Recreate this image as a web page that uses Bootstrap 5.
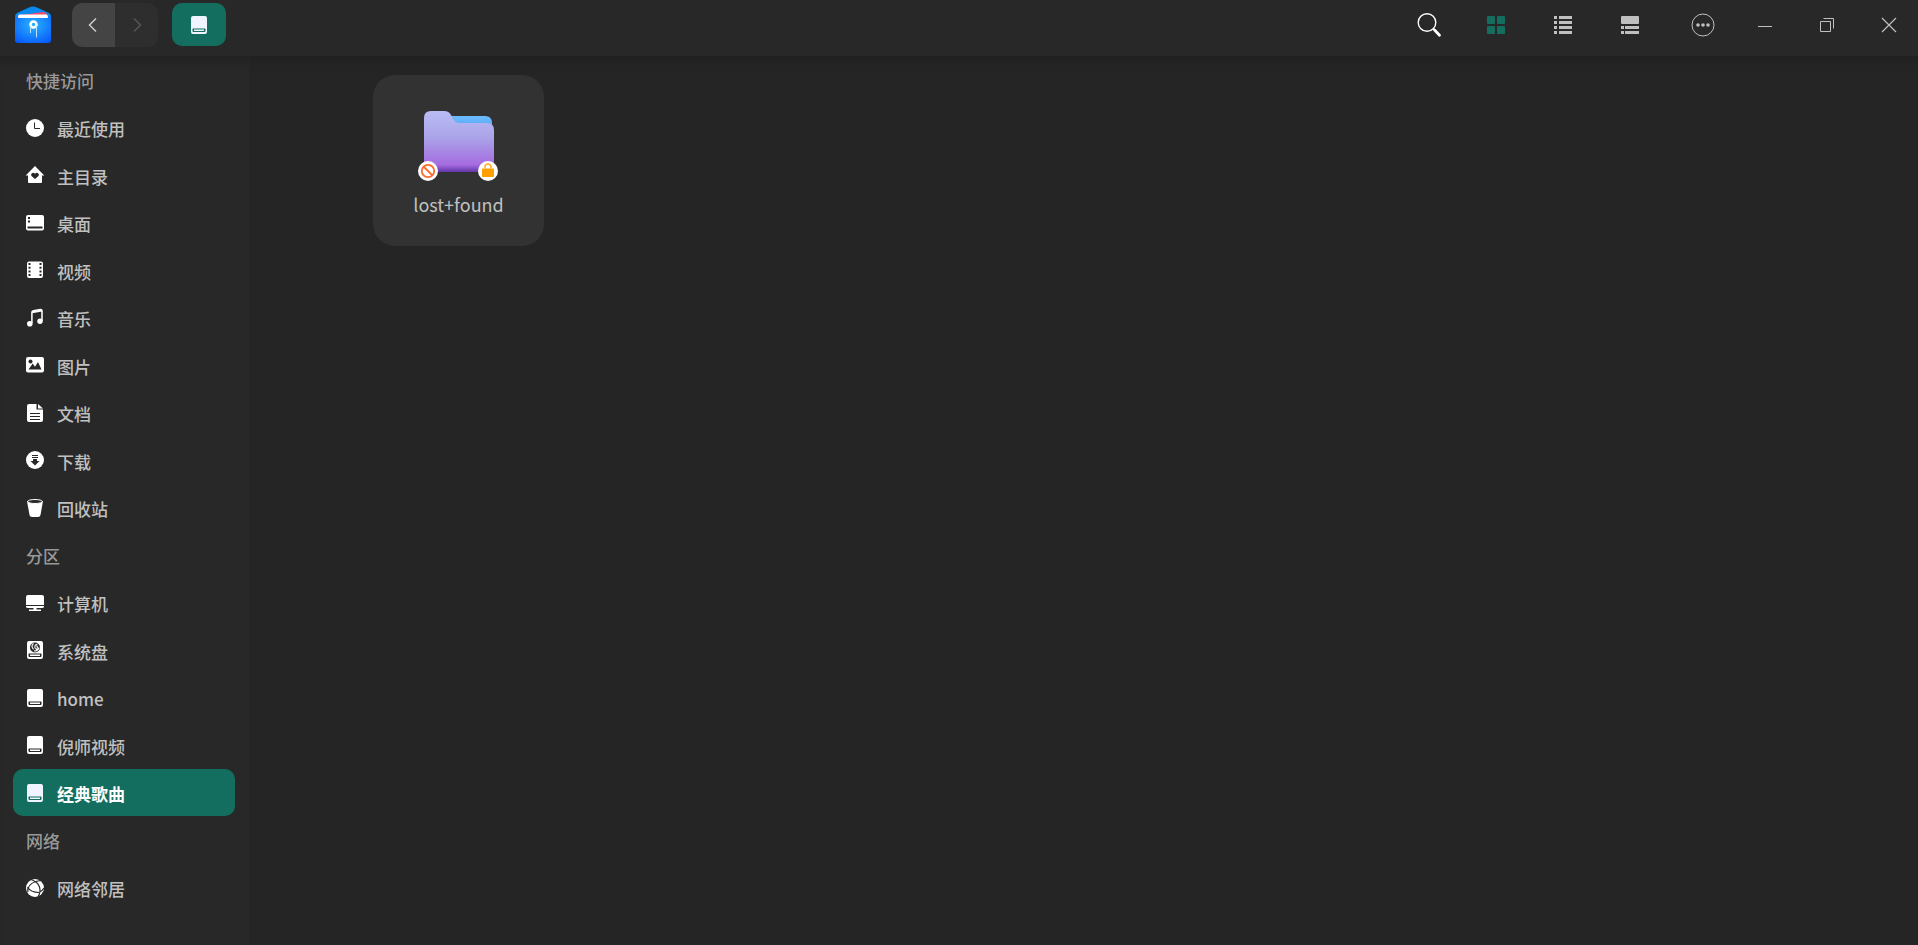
<!DOCTYPE html>
<html lang="zh-CN" data-bs-theme="dark">
<head>
<meta charset="utf-8">
<meta name="viewport" content="width=device-width, initial-scale=1">
<title>文件管理器</title>
<link href="https://cdn.jsdelivr.net/npm/bootstrap@5.3.0/dist/css/bootstrap.min.css" rel="stylesheet">
<style>
:root { --accent: #136e5f; --panel: #282828; --canvas: #252525; }
body { font: 500 17px/24px "Noto Sans CJK SC", "Noto Sans", sans-serif; background: var(--canvas); color: #c0c0c0; }
button { border: 0; background: none; color: inherit; padding: 0; display: inline-flex; align-items: center; justify-content: center; }
svg { display: block; flex: none; }
.titlebar { height: 56px; background: var(--panel); padding: 1px 9px 8px 15px; }
.app-logo { margin-right: 20px; }
.history button { width: 43px; height: 44px; }
.history .back { background: #444; border-radius: 10px 0 0 10px; }
.history .forward { background: #2e2e2e; color: #555; border-radius: 0 10px 10px 0; }
.disk-tab { width: 54px; height: 43px; margin-left: 14px; background: var(--accent); border-radius: 10px; color: #f0f4ff; }
.views { gap: 27px; margin-right: 33px; }
.views button { width: 40px; height: 40px; }
.window-controls { gap: 22px; }
.window-controls button { width: 40px; height: 40px; }
.sidebar { width: 250px; background: var(--panel); padding: 0 15px 34px 13px; }
.under-shadow { box-shadow: inset 0 16px 14px -14px #1f1f1f; }
.place-list li { height: 48px; }
.place-list li:nth-child(even) { height: 47px; }
.place-list h2 { font: inherit; color: #999; margin: 0; padding: 2px 0 0 13px; height: 100%; display: flex; align-items: center; }
.place { height: 100%; display: flex; align-items: center; gap: 12px; padding-left: 12px; border-radius: 10px; color: #c0c0c0; text-decoration: none; }
.place svg { color: #fff; }
.place span { padding-top: 3px; }
.place.current { background: var(--accent); color: #fff; font-weight: 700; }
.place.current svg { color: #f0f4ff; }
.files { padding: 19px 20px 20px 123px; }
.file-tile { width: 171px; height: 171px; background: #323232; border-radius: 22px; flex-direction: column; justify-content: flex-start; padding-top: 32px; gap: 11px; font-weight: 400; font-size: 18px; }
</style>
</head>
<body class="d-flex flex-column min-vh-100">
<svg width="0" height="0" class="position-absolute" aria-hidden="true">
  <symbol id="disk" viewBox="0 0 20 20">
    <path fill="currentColor" fill-rule="evenodd" d="M4 1h12a2 2 0 0 1 2 2v14a2 2 0 0 1-2 2H4a2 2 0 0 1-2-2V3a2 2 0 0 1 2-2zM4 13.500q-.500 0-.500.500v2q0 1 1 1h11q1 0 1-1v-2q0-.500-.500-.500zM5 14.500h10v1.500H5z"/>
  </symbol>
</svg>

<header class="titlebar d-flex align-items-center">
  <svg class="app-logo" width="37" height="37" viewBox="0 3 37 37" aria-hidden="true">
    <defs><radialGradient id="lg" cx=".5" cy=".35" r=".75"><stop stop-color="#2ab4ff"/><stop offset="1" stop-color="#0759fa"/></radialGradient></defs>
    <path fill="#0789f0" d="M0 13.500Q0 11 2 10L14 4.500Q18 2.500 22 4.500L34 10Q36 11 36 13.500V20H0z"/>
    <path fill="#ff4967" d="M3 12.500l25-3.500q3 0 4 3V15H3z"/>
    <path fill="#fff" d="M4 11.500h27.500q1.500.500 1.500 3v1H3v-1q0-2 1-3z"/>
    <path fill="url(#lg)" d="M0 12q1 2.500 4 3h28q3-.500 4-3V37q0 3-3 3H3q-3 0-3-3z"/>
    <circle cx="18.500" cy="21.500" r="3" fill="none" stroke="#fff" stroke-width="2.500"/>
    <path d="M15.500 23v7M21.500 23v11.500" stroke="#b8e4ff"/>
  </svg>
  <div class="history d-flex">
    <button class="back" aria-label="后退"><svg width="12" height="16" viewBox="0 0 12 16" fill="none" stroke="#ccc" stroke-width="1.500"><path d="M8 1.500 1.500 8 8 14.500"/></svg></button>
    <button class="forward" aria-label="前进" disabled><svg width="12" height="16" viewBox="0 0 12 16" fill="none" stroke="currentColor" stroke-width="1.500"><path d="M3 1.500 9.500 8 3 14.500"/></svg></button>
  </div>
  <button class="disk-tab" aria-label="经典歌曲"><svg width="20" height="20"><use href="#disk"/></svg></button>

  <div class="views d-flex ms-auto">
    <button aria-label="搜索"><svg width="26" height="26" viewBox="0 0 26 26" fill="none" stroke="#fff"><circle cx="11" cy="10.500" r="8.800" stroke-width="1.400"/><path d="m17.300 16.800 1.500 1.500" stroke-width="2"/><path d="m18.800 18.300 4.700 4.900" stroke-width="2.800" stroke-linecap="round"/></svg></button>
    <button aria-label="图标视图"><svg width="18" height="18" fill="#136e5f"><rect width="8" height="8" rx="1"/><rect x="10" width="8" height="8" rx="1"/><rect y="10" width="8" height="8" rx="1"/><rect x="10" y="10" width="8" height="8" rx="1"/></svg></button>
    <button aria-label="列表视图"><svg width="18" height="18" fill="#c0c0c0"><path d="M0 0h3v3H0zM5 0h13v3H5zM0 5h3v3H0zM5 5h13v3H5zM0 10h3v3H0zM5 10h13v3H5zM0 15h3v3H0zM5 15h13v3H5z"/></svg></button>
    <button aria-label="分栏视图"><svg width="18" height="18" fill="#c0c0c0"><rect width="18" height="8" rx="1"/><path d="M0 10h3v3H0zM4 10h14v3H4zM0 15h3v3H0zM4 15h14v3H4z"/></svg></button>
  </div>
  <div class="window-controls d-flex">
    <button aria-label="菜单"><svg width="24" height="24" viewBox="0 0 24 24" fill="#c0c0c0"><circle cx="12" cy="12" r="11" fill="none" stroke="#c0c0c0"/><circle cx="7" cy="12" r="1.800"/><circle cx="12" cy="12" r="1.800"/><circle cx="17" cy="12" r="1.800"/></svg></button>
    <button aria-label="最小化"><svg width="14" height="14" stroke="#c0c0c0"><path d="M0 8.500h14"/></svg></button>
    <button aria-label="还原"><svg width="16" height="16" fill="none" stroke="#c0c0c0"><path d="M1.500 4.500h10v10h-10zM4.500 1.500h10v10"/></svg></button>
    <button aria-label="关闭"><svg width="16" height="16" stroke="#c0c0c0" stroke-width="1.200"><path d="m1 1 14 14M15 1 1 15"/></svg></button>
  </div>
</header>

<div class="d-flex flex-grow-1">
  <nav class="sidebar under-shadow flex-shrink-0" aria-label="位置">
    <ul class="place-list list-unstyled mb-0">
      <li><h2>快捷访问</h2></li>
      <li><a class="place" href="#"><svg width="20" height="20"><circle cx="10" cy="10" r="9" fill="currentColor"/><path d="M9.500 4.500v6H15" fill="none" stroke="#282828"/></svg><span>最近使用</span></a></li>
      <li><a class="place" href="#"><svg width="20" height="20"><path fill="currentColor" d="M10 1 19.300 10.500H17V17q0 1-1 1H4q-1 0-1-1v-6.500H.700z"/><path fill="#282828" d="M10 14 6.500 11Q5.500 9.500 6.700 8.400 8.500 7 10 8.800 11.500 7 13.300 8.400 14.500 9.500 13.500 11z"/></svg><span>主目录</span></a></li>
      <li><a class="place" href="#"><svg width="20" height="20"><rect x="1" y="2" width="18" height="15.500" rx="2" fill="currentColor"/><path fill="#282828" d="M3 4h2v2H3zM3 7.500h2v2H3zM2.500 13.500h15v2h-15z"/></svg><span>桌面</span></a></li>
      <li><a class="place" href="#"><svg width="20" height="20"><rect x="2" y="1.500" width="16" height="16.500" rx="2" fill="currentColor"/><path d="M4.500 3V17M15.500 3V17" stroke="#282828" stroke-width="2" stroke-dasharray="2 1.700"/></svg><span>视频</span></a></li>
      <li><a class="place" href="#"><svg width="20" height="20"><circle cx="4.800" cy="15.800" r="2.800" fill="currentColor"/><circle cx="15" cy="13.200" r="2.700" fill="currentColor"/><path d="M6.900 15V4.500q0-1.500 1.500-1.800l7-1.200q1.600-.200 1.600 1.300V13" fill="none" stroke="currentColor" stroke-width="1.500"/><path d="M7 4.300 17 2.500" stroke="currentColor" stroke-width="2"/></svg><span>音乐</span></a></li>
      <li><a class="place" href="#"><svg width="20" height="20"><rect x="1" y="2" width="18" height="15.500" rx="2" fill="currentColor"/><circle cx="5.500" cy="6.500" r="2" fill="#282828"/><path fill="#282828" d="m3.500 14.500 4.200-6 2.300 3.200L13 7l3.500 7.500z"/></svg><span>图片</span></a></li>
      <li><a class="place" href="#"><svg width="20" height="20"><path fill="currentColor" d="M4 1h7.500v5.500H18V17q0 2-2 2H4q-2 0-2-2V3q0-2 2-2zM13 1l5 4.500h-5z"/><path d="M5 10.500h10M5 13.500h10M5 16.500h10" stroke="#282828"/></svg><span>文档</span></a></li>
      <li><a class="place" href="#"><svg width="20" height="20"><circle cx="10" cy="10" r="9" fill="currentColor"/><path fill="#282828" d="M7 5h6v1H7zM7 7h6v1H7zM8 9h4v2h2.500L10 15.500 5.500 11H8z"/></svg><span>下载</span></a></li>
      <li><a class="place" href="#"><svg width="20" height="20"><path fill="currentColor" d="M2 3h16l-2.500 14q-.400 2-2.500 2H7q-2.100 0-2.500-2z"/><ellipse cx="10" cy="3.500" rx="7.300" ry="2" fill="#282828" stroke="currentColor"/></svg><span>回收站</span></a></li>
      <li><h2>分区</h2></li>
      <li><a class="place" href="#"><svg width="20" height="20" fill="currentColor"><path d="M3 2h14q2 0 2 2v8H1V4q0-2 2-2zM1 13h18v.500q0 1.500-2 1.500H3q-2 0-2-1.500zM8.500 15h3v1.500H16V18H4v-1.500h4.500z"/></svg><span>计算机</span></a></li>
      <li><a class="place" href="#"><svg width="20" height="20"><use href="#disk"/><circle cx="10" cy="7.500" r="5" fill="#282828"/><g fill="none" stroke="#fff" stroke-width="1.100"><path d="M8.500 3.500Q5.500 6 8.500 9.500M12.500 4Q8.500 5 10.500 9M14 7.500Q13 11 9 11M11.500 5.500q2 2-.500 4.500"/></g></svg><span>系统盘</span></a></li>
      <li><a class="place" href="#"><svg width="20" height="20"><use href="#disk"/></svg><span>home</span></a></li>
      <li><a class="place" href="#"><svg width="20" height="20"><use href="#disk"/></svg><span>倪师视频</span></a></li>
      <li><a class="place current" href="#" aria-current="page"><svg width="20" height="20"><use href="#disk"/></svg><span>经典歌曲</span></a></li>
      <li><h2>网络</h2></li>
      <li><a class="place" href="#"><svg width="20" height="20"><circle cx="10" cy="10" r="9" fill="currentColor"/><path d="M6 1.500Q13 4 14.500 9T13 19M15.500 2.500Q5 4 3 10.500M2.500 9q3 5.500 11.500 5.500M3 14q-.500-3 0-4M14.500 14q3-1.500 4.500-4" fill="none" stroke="#282828" stroke-width="1.200"/></svg><span>网络邻居</span></a></li>
    </ul>
  </nav>

  <main class="files under-shadow flex-grow-1">
    <button class="file-tile">
      <svg width="84" height="74" viewBox="1 0 84 74" aria-hidden="true">
        <defs>
          <linearGradient id="front" x2="0" y2="1"><stop stop-color="#b9bdf5"/><stop offset=".45" stop-color="#aaa2e8"/><stop offset=".88" stop-color="#a56ce0"/><stop offset="1" stop-color="#6336a8"/></linearGradient>
          <linearGradient id="rear" x2="0" y2="1"><stop stop-color="#6dbcff"/><stop offset="1" stop-color="#4895ee"/></linearGradient>
        </defs>
        <path fill="url(#rear)" d="M30 9h39q7 0 7 7v14H30z"/>
        <path fill="url(#front)" d="M15 4h13q5 0 7 4l2 4q2 4 7 4h27q7 0 7 7v38q0 4-4 4H12q-4 0-4-4V11q0-7 7-7z"/>
        <circle cx="12" cy="64" r="10" fill="#fff"/>
        <circle cx="12" cy="64" r="6.200" fill="none" stroke="#ff6a2b" stroke-width="1.800"/>
        <path d="m8 60 8 8" stroke="#ff6a2b" stroke-width="1.800"/>
        <circle cx="72" cy="64" r="10" fill="#fff"/>
        <rect x="66" y="61.500" width="12" height="8.500" rx="1" fill="#ffa000"/>
        <path d="M69 61.500V60q0-3 3-3t3 3v1.500" fill="none" stroke="#ffb020" stroke-width="1.500"/>
      </svg>
      <span>lost+found</span>
    </button>
  </main>
</div>
<script src="https://cdn.jsdelivr.net/npm/bootstrap@5.3.0/dist/js/bootstrap.bundle.min.js"></script>
</body>
</html>
